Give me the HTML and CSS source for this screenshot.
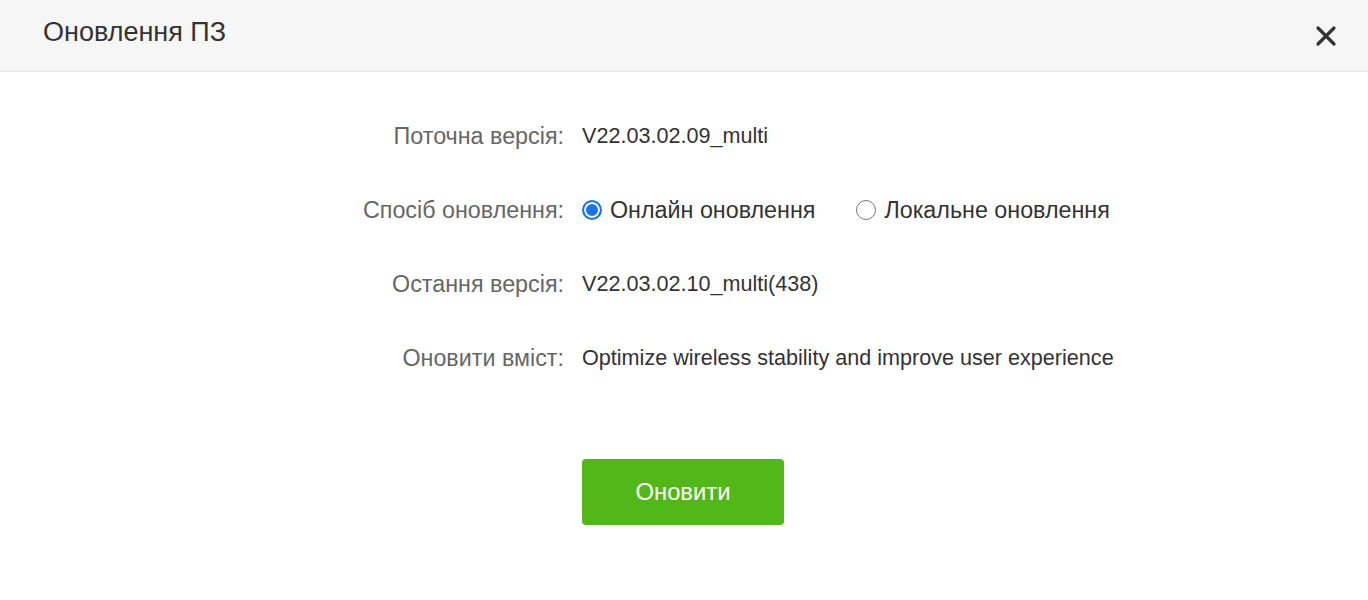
FILE: index.html
```html
<!DOCTYPE html>
<html lang="uk">
<head>
  <meta charset="UTF-8" />
  <meta name="viewport" content="width=device-width, initial-scale=1.0" />
  <title>Оновлення ПЗ</title>
  <link rel="stylesheet" href="styles.css">
</head>
<body>
  <div class="dialog">
    <!-- Шапка -->
    <div class="dialog-header">
      <h2>Оновлення ПЗ</h2>
      <button class="close-btn" aria-label="Закрити">
        <svg width="22" height="22" viewBox="0 0 22 22">
          <path d="M3 3 L19 19 M19 3 L3 19" stroke="#333" stroke-width="3.2" stroke-linecap="round" />
        </svg>
      </button>
    </div>

    <!-- Форма -->
    <div class="dialog-body">
      <div class="form">
        <div class="label">Поточна версія:</div>
        <div class="value">V22.03.02.09_multi</div>

        <div class="label">Спосіб оновлення:</div>
        <div class="value radios">
          <label class="radio checked"><span class="dot"></span>Онлайн оновлення</label>
          <label class="radio"><span class="dot"></span>Локальне оновлення</label>
        </div>

        <div class="label">Остання версія:</div>
        <div class="value">V22.03.02.10_multi(438)</div>

        <div class="label">Оновити вміст:</div>
        <div class="value">Optimize wireless stability and improve user experience</div>

        <div></div>
        <div class="actions">
          <button class="upgrade-btn">Оновити</button>
        </div>
      </div>
    </div>
  </div>
</body>
</html>
```

FILE: styles.css
```css
* {
  box-sizing: border-box;
}

body {
  margin: 0;
  font-family: "Liberation Sans", Arial, sans-serif;
  background: #fff;
  color: #333;
}

.dialog {
  width: 1368px;
  height: 600px;
  background: #fff;
}

.dialog-header {
  height: 72px;
  background: #f6f6f6;
  border-bottom: 1px solid #e4e4e4;
  display: flex;
  align-items: center;
  justify-content: space-between;
  padding: 0 31px 0 43px;
}

.dialog-header h2 {
  margin: 0 0 8px 0;
  font-size: 27px;
  font-weight: normal;
  color: #333;
  line-height: 30px;
}

.close-btn {
  background: none;
  border: none;
  padding: 0;
  cursor: pointer;
  display: flex;
}

.dialog-body {
  padding-top: 51px;
}

.form {
  display: grid;
  grid-template-columns: 564px auto;
  column-gap: 18px;
  row-gap: 48px;
  align-items: center;
}

.label {
  text-align: right;
  color: #666;
  font-size: 23.3px;
  line-height: 26px;
}

.value {
  color: #333;
  font-size: 21.6px;
  line-height: 26px;
}

.radios {
  display: flex;
  gap: 41px;
  font-size: 23.3px;
}

.radio {
  display: flex;
  align-items: center;
  gap: 8px;
  cursor: pointer;
}

.dot {
  width: 20px;
  height: 20px;
  border: 1px solid #777;
  border-radius: 50%;
  background: #fff;
}

.radio.checked .dot {
  border: 2px solid #1a73e8;
  box-shadow: inset 0 0 0 2px #fff;
  background: #1a73e8;
}

.actions {
  padding-top: 40px;
}

.upgrade-btn {
  width: 202px;
  height: 66px;
  background: #52b81a;
  color: #fff;
  border: none;
  border-radius: 4px;
  font-family: inherit;
  font-size: 23.8px;
  cursor: pointer;
}

.upgrade-btn:hover {
  background: #4aa817;
}
```
